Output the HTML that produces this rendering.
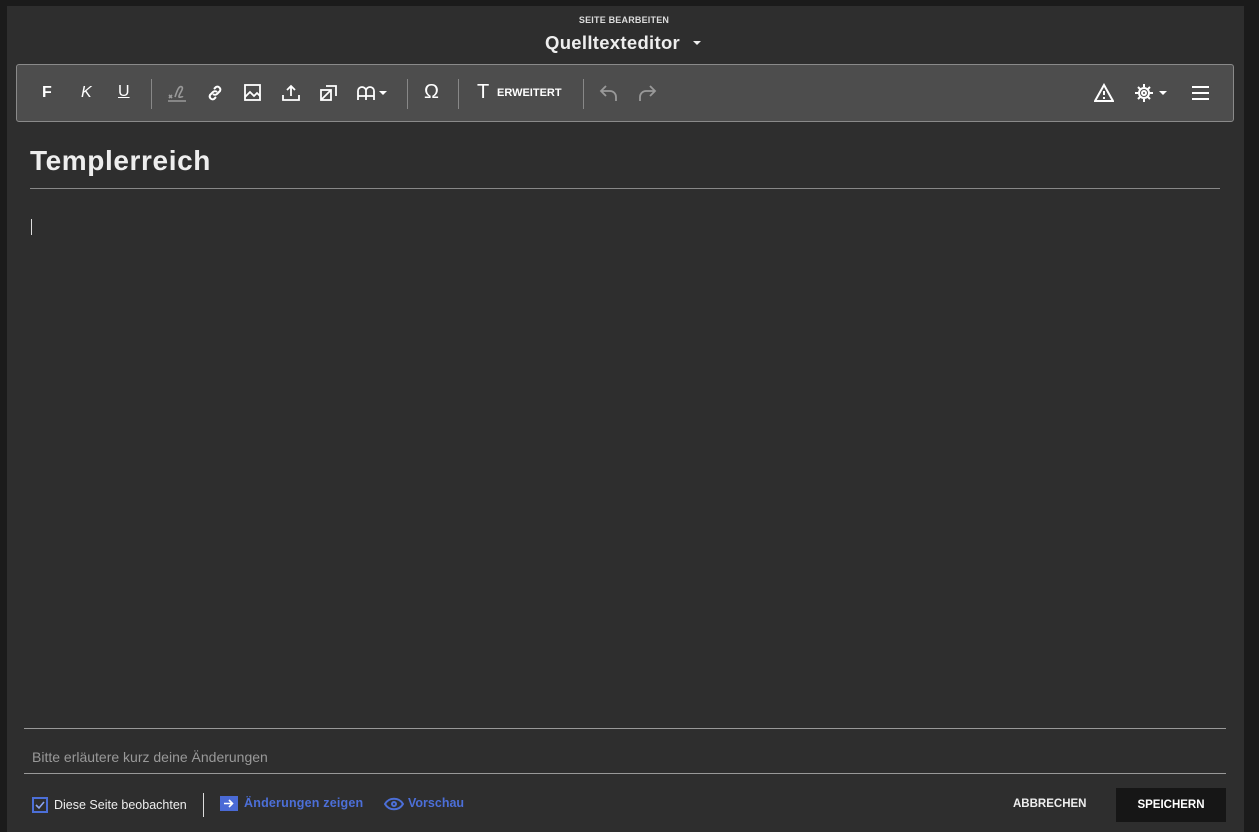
<!DOCTYPE html>
<html><head><meta charset="utf-8"><style>
*{box-sizing:border-box;margin:0;padding:0}
body{width:1259px;height:832px;background:#1b1b1b;font-family:"Liberation Sans",sans-serif;position:relative;overflow:hidden;color:#fff}
.panel{position:absolute;left:7px;top:6px;width:1237px;height:826px;background:#2e2e2e}
.abs{position:absolute}
.tb{position:absolute;left:16px;top:64px;width:1218px;height:58px;background:#4d4d4d;border:1px solid #8a8a8a;border-radius:3px}
.sep{position:absolute;top:14px;width:1px;height:30px;background:#888}
.ic{position:absolute;top:18px}
svg{display:block}
</style></head><body>
<div class="panel"></div>
<div class="abs" style="left:0;width:1248px;top:15px;text-align:center;font-size:9px;font-weight:bold;color:#ddd;letter-spacing:.2px">SEITE BEARBEITEN</div>
<div class="abs" style="left:545px;top:32px;font-size:18.5px;font-weight:bold;color:#eee;letter-spacing:.3px">Quelltexteditor</div>
<div class="abs" style="left:692px;top:40px"><svg width="10" height="6"><path d="M1 1h8l-4 4z" fill="#eee"/></svg></div>
<div class="tb">
<div class="abs" style="left:25px;top:19px;font-size:16px;font-weight:bold">F</div>
<div class="abs" style="left:64px;top:19px;font-size:16px;font-style:italic">K</div>
<div class="abs" style="left:101px;top:18px;font-size:16px;text-decoration:underline">U</div>
<div class="sep" style="left:134px"></div>
<div class="ic" style="left:150px"><svg width="20" height="20" stroke="#999" fill="none" stroke-width="1.6"><path d="M8 14c2-6 4-12 7-10 2 2-4 8-3 10 1 1 3-1 4 0"/><path d="M2 12l3 3M5 12l-3 3M1 18h18"/></svg></div>
<div class="ic" style="left:188px"><svg width="20" height="20" stroke="#fff" fill="none" stroke-width="2"><path d="M9 6l2-2a3 3 0 014 4l-3 3a3 3 0 01-4 0M11 14l-2 2a3 3 0 01-4-4l3-3a3 3 0 014 0"/></svg></div>
<div class="ic" style="left:226px"><svg width="20" height="20" stroke="#fff" fill="none" stroke-width="1.8"><rect x="2" y="2" width="15" height="15"/><path d="M2 14l5-5 4 4 3-3 3 3"/></svg></div>
<div class="ic" style="left:264px"><svg width="20" height="20" stroke="#fff" fill="none" stroke-width="1.8"><path d="M10 13V3M6 7l4-4 4 4M2 12v5h16v-5"/></svg></div>
<div class="ic" style="left:302px"><svg width="20" height="20" stroke="#fff" fill="none" stroke-width="1.8"><rect x="2" y="7" width="10" height="10"/><path d="M7 3h10v10M2 17l10-10"/></svg></div>
<div class="ic" style="left:339px"><svg width="36" height="20" stroke="#fff" fill="none" stroke-width="1.8"><path d="M2 17V8a4 4 0 018 0v9M10 17V8a4 4 0 018 0v9M2 13h16"/><path d="M23 8h8l-4 4z" fill="#fff" stroke="none"/></svg></div>
<div class="sep" style="left:390px"></div>
<div class="abs" style="left:407px;top:16px;font-size:20px">Ω</div>
<div class="sep" style="left:441px"></div>
<div class="abs" style="left:460px;top:16px;font-size:20px">T</div>
<div class="abs" style="left:480px;top:22px;font-size:11px;font-weight:bold">ERWEITERT</div>
<div class="sep" style="left:566px"></div>
<div class="ic" style="left:582px"><svg width="20" height="20" stroke="#999" fill="none" stroke-width="1.8"><path d="M7 3L2 8l5 5M2 8h9a6 6 0 016 6v4"/></svg></div>
<div class="ic" style="left:620px"><svg width="20" height="20" stroke="#999" fill="none" stroke-width="1.8"><path d="M13 3l5 5-5 5M18 8H9a6 6 0 00-6 6v4"/></svg></div>
<div class="ic" style="left:1077px"><svg width="20" height="20" stroke="#fff" fill="none" stroke-width="2"><path d="M10 2L1 18h18z"/><path d="M10 8v4M10 14v2"/></svg></div>
<div class="ic" style="left:1117px"><svg width="36" height="20" fill="none" stroke="#fff" stroke-width="2"><circle cx="10" cy="10" r="5"/><circle cx="10" cy="10" r="2"/><path d="M10 1v3M10 16v3M1 10h3M16 10h3M4 4l2 2M14 14l2 2M4 16l2-2M14 6l2-2"/><path d="M25 8h8l-4 4z" fill="#fff" stroke="none"/></svg></div>
<div class="ic" style="left:1174px"><svg width="20" height="20" stroke="#fff" stroke-width="2"><path d="M1 4h17M1 10h17M1 16h17"/></svg></div>
</div>
<div class="abs" style="left:30px;top:145px;font-size:28px;font-weight:bold;color:#eee;letter-spacing:.6px">Templerreich</div>
<div class="abs" style="left:30px;top:188px;width:1190px;height:1px;background:#888"></div>
<div class="abs" style="left:31px;top:219px;width:1px;height:16px;background:#ddd"></div>
<div class="abs" style="left:24px;top:728px;width:1202px;height:1px;background:#999"></div>
<div class="abs" style="left:32px;top:749px;font-size:14px;color:#999">Bitte erläutere kurz deine Änderungen</div>
<div class="abs" style="left:24px;top:773px;width:1202px;height:1px;background:#999"></div>
<div class="abs" style="left:32px;top:797px;width:16px;height:16px;border:2px solid #4c6fd8"><svg width="12" height="12" stroke="#8ba4f0" fill="none" stroke-width="1.6"><path d="M2 6l3 3 5-6"/></svg></div>
<div class="abs" style="left:54px;top:798px;font-size:12.5px;color:#eee">Diese Seite beobachten</div>
<div class="abs" style="left:203px;top:793px;width:1px;height:24px;background:#ddd"></div>
<div class="abs" style="left:220px;top:796px;width:18px;height:15px;background:#4a6ad6"><svg width="18" height="15" stroke="#fff" fill="none" stroke-width="1.6"><path d="M4 7.5h8M9 4l3.5 3.5L9 11"/></svg></div>
<div class="abs" style="left:244px;top:796px;font-size:12.5px;font-weight:bold;color:#4c6fd8;letter-spacing:.2px">Änderungen zeigen</div>
<div class="abs" style="left:384px;top:796px"><svg width="20" height="16" stroke="#4c6fd8" fill="none" stroke-width="2"><path d="M1 8c4-7 14-7 18 0-4 7-14 7-18 0z"/><circle cx="10" cy="8" r="2"/></svg></div>
<div class="abs" style="left:408px;top:796px;font-size:12.5px;font-weight:bold;color:#4c6fd8">Vorschau</div>
<div class="abs" style="left:1013px;top:798px;font-size:11.5px;font-weight:bold;color:#eee">ABBRECHEN</div>
<div class="abs" style="left:1116px;top:788px;width:110px;height:34px;background:#161616;font-size:11.5px;font-weight:bold;color:#fff;text-align:center;line-height:34px">SPEICHERN</div>
</body></html>
